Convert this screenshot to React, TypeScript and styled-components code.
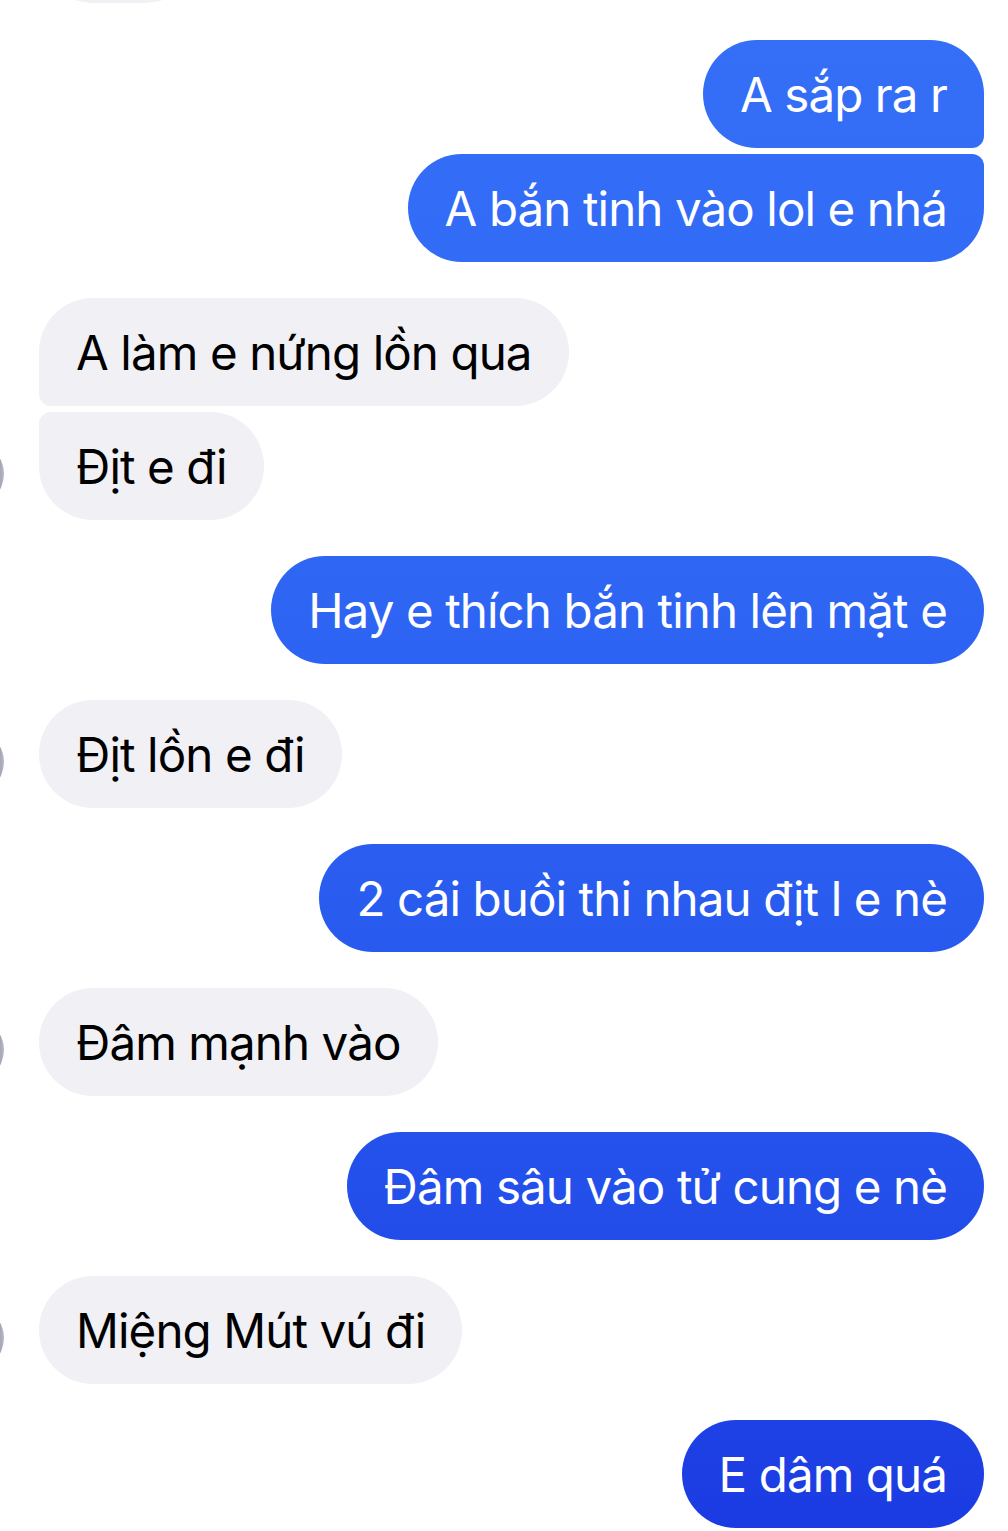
import React from "react";
import styled, { createGlobalStyle } from "styled-components";

const Global = createGlobalStyle`
  html, body { margin: 0; padding: 0; background: #ffffff; }
  body { font-family: Inter, "Noto Sans", "Liberation Sans", sans-serif; overflow: hidden; }
`;

const Thread = styled.div`
  width: 1008px;
  height: 1531px;
  overflow: hidden;
  box-sizing: border-box;
  padding: 0 24px 0 39px;
  display: flex;
  flex-direction: column;
`;

const Inner = styled.div`
  margin-top: -105px;
  display: flex;
  flex-direction: column;
`;

const Row = styled.div<{ $out?: boolean; $gap: number }>`
  display: flex;
  align-items: center;
  justify-content: ${(p) => (p.$out ? "flex-end" : "flex-start")};
  margin-top: ${(p) => p.$gap}px;
  margin-left: ${(p) => (p.$out ? "0" : "-99px")};
`;

const Avatar = styled.div<{ $show?: boolean }>`
  width: 64px;
  height: 64px;
  flex: 0 0 64px;
  margin-right: 35px;
  margin-top: 16px;
  border-radius: 50%;
  background: ${(p) =>
    p.$show ? "linear-gradient(90deg, #c4c6d0 0%, #8a8c9c 85%, #b8bac6 100%)" : "transparent"};
`;

const Bubble = styled.div<{ $out?: boolean; $tl: number; $tr: number; $bl: number; $br: number }>`
  height: 108px;
  line-height: 110px;
  padding: 0 37px;
  box-sizing: border-box;
  font-size: 47.5px;
  letter-spacing: -0.9px;
  white-space: nowrap;
  color: ${(p) => (p.$out ? "#ffffff" : "#000000")};
  background: ${(p) =>
    p.$out
      ? "linear-gradient(180deg, #356ff7 0%, #2f67f4 35%, #2656ed 70%, #1b3be2 100%) fixed"
      : "#f0f0f5"};
  border-radius: ${(p) => `${p.$tl}px ${p.$tr}px ${p.$br}px ${p.$bl}px`};
`;

type Msg = {
  text: string;
  out?: boolean;
  gap: number;
  tl?: number;
  tr?: number;
  bl?: number;
  br?: number;
  avatar?: boolean;
  width?: number;
};

const R = 54;
const S = 12;

const messages: Msg[] = [
  { text: "", gap: 0, width: 160 },
  { text: "A sắp ra r", out: true, gap: 37, br: S },
  { text: "A bắn tinh vào lol e nhá", out: true, gap: 6, tr: S },
  { text: "A làm e nứng lồn qua", gap: 36, bl: S },
  { text: "Địt e đi", gap: 6, tl: S, avatar: true },
  { text: "Hay e thích bắn tinh lên mặt e", out: true, gap: 36 },
  { text: "Địt lồn e đi", gap: 36, avatar: true },
  { text: "2 cái buồi thi nhau địt l e nè", out: true, gap: 36 },
  { text: "Đâm mạnh vào", gap: 36, avatar: true },
  { text: "Đâm sâu vào tử cung e nè", out: true, gap: 36 },
  { text: "Miệng Mút vú đi", gap: 36, avatar: true },
  { text: "E dâm quá", out: true, gap: 36 },
];

export default function App() {
  return (
    <>
      <Global />
      <Thread>
        <Inner>
          {messages.map((m, i) => (
            <Row key={i} $out={m.out} $gap={m.gap}>
              {!m.out && <Avatar $show={m.avatar} />}
              <Bubble
                $out={m.out}
                $tl={m.tl ?? R}
                $tr={m.tr ?? R}
                $bl={m.bl ?? R}
                $br={m.br ?? R}
                style={m.width ? { width: m.width } : undefined}
              >
                {m.text}
              </Bubble>
            </Row>
          ))}
        </Inner>
      </Thread>
    </>
  );
}
